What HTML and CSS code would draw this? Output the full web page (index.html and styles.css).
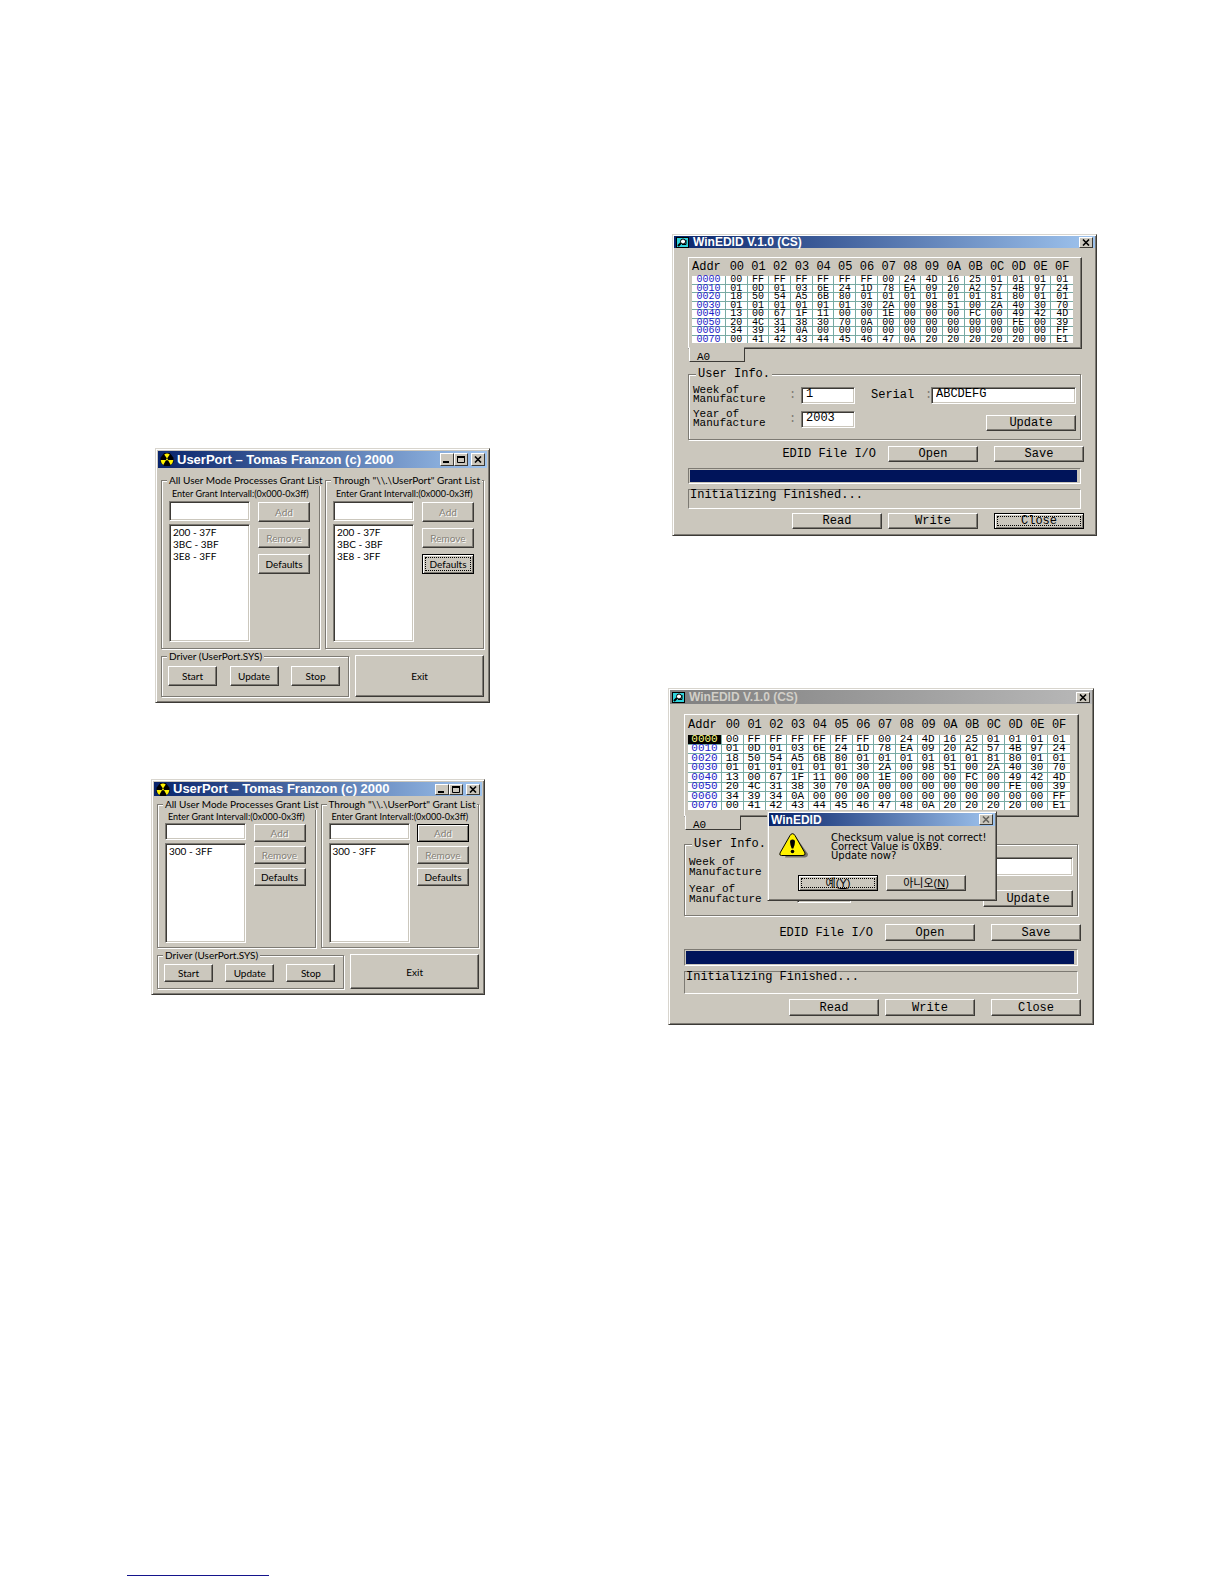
FILE: index.html
```html
<!DOCTYPE html>
<html lang="en">
<head>
<meta charset="utf-8">
<title>UserPort and WinEDID</title>
<link rel="stylesheet" href="styles.css">
</head>
<body>
<svg width="0" height="0" class="defs" aria-hidden="true">
  <symbol id="radiation" viewBox="0 0 14 14">
    <path d="M4 0H10L14 5V10L10 14H4L0 10V5Z" fill="#000"/>
    <path d="M7 6 4 1.500Q7-.5 10 1.500ZM8 7.500 13.800 7.500Q13.500 11 11 12.800ZM6 7.500 3 12.800Q.5 11 .2 7.500Z" fill="#fff200"/>
    <circle cx="7" cy="7" r="1" fill="#fff200"/>
  </symbol>
  <symbol id="lens" viewBox="0 0 13 11">
    <path d="M0 0H13V11H0Z" fill="#000"/><path d="M1 1H12V10H1Z" fill="#2fd3dc"/>
    <path d="M2 9 5 6" stroke="#000" stroke-width="2"/><circle cx="7" cy="4.500" r="2.500" fill="#fff" stroke="#000"/>
    <path d="M6 7.500H10V3" fill="none" stroke="#000"/>
  </symbol>
  <symbol id="x" viewBox="0 0 8 7"><path d="M1 .5 7 6.500M7 .5 1 6.500" stroke="#000" stroke-width="1.600"/></symbol>
  <symbol id="min" viewBox="0 0 8 7"><path d="M0 6H6" stroke="#000" stroke-width="2"/></symbol>
  <symbol id="max" viewBox="0 0 8 7"><path d="M0 1H8" stroke="#000" stroke-width="2"/><path d="M.5 1V6.500H7.500V1" fill="none" stroke="#000"/></symbol>
</svg>
<main class="page">
  <div class="column left">
    <section class="window userport">
      <header class="titlebar"><svg class="app"><use href="#radiation"/></svg><h2>UserPort – Tomas Franzon (c) 2000</h2>
        <button class="cap" aria-label="Minimize"><svg><use href="#min"/></svg></button><button class="cap" aria-label="Maximize"><svg><use href="#max"/></svg></button><button class="cap close" aria-label="Close"><svg><use href="#x"/></svg></button></header>
      <div class="ports">
        <fieldset class="group">
          <legend>All User Mode Processes Grant List</legend>
          <label class="hint" for="a1">Enter Grant Intervall:(0x000-0x3ff)</label>
          <div class="grant">
            <div class="lists"><input id="a1" type="text"><select multiple size="3" aria-label="Granted ports"><option>200 - 37F</option><option>3BC - 3BF</option><option>3E8 - 3FF</option></select></div>
            <div class="actions"><button class="btn" disabled>Add</button><button class="btn" disabled>Remove</button><button class="btn">Defaults</button></div>
          </div>
        </fieldset>
        <fieldset class="group">
          <legend>Through "\\.\UserPort" Grant List</legend>
          <label class="hint" for="a2">Enter Grant Intervall:(0x000-0x3ff)</label>
          <div class="grant">
            <div class="lists"><input id="a2" type="text"><select multiple size="3" aria-label="Granted ports"><option>200 - 37F</option><option>3BC - 3BF</option><option>3E8 - 3FF</option></select></div>
            <div class="actions"><button class="btn" disabled>Add</button><button class="btn" disabled>Remove</button><button class="btn default focus">Defaults</button></div>
          </div>
        </fieldset>
      </div>
      <div class="driver">
        <fieldset class="group">
          <legend>Driver (UserPort.SYS)</legend>
          <div class="driver-buttons"><button class="btn">Start</button><button class="btn">Update</button><button class="btn">Stop</button></div>
        </fieldset>
        <button class="btn exit">Exit</button>
      </div>
    </section>

    <section class="window userport compact">
      <header class="titlebar"><svg class="app"><use href="#radiation"/></svg><h2>UserPort – Tomas Franzon (c) 2000</h2>
        <button class="cap" aria-label="Minimize"><svg><use href="#min"/></svg></button><button class="cap" aria-label="Maximize"><svg><use href="#max"/></svg></button><button class="cap close" aria-label="Close"><svg><use href="#x"/></svg></button></header>
      <div class="ports">
        <fieldset class="group">
          <legend>All User Mode Processes Grant List</legend>
          <label class="hint" for="b1">Enter Grant Intervall:(0x000-0x3ff)</label>
          <div class="grant">
            <div class="lists"><input id="b1" type="text"><select multiple size="3" aria-label="Granted ports"><option>300 - 3FF</option></select></div>
            <div class="actions"><button class="btn" disabled>Add</button><button class="btn" disabled>Remove</button><button class="btn">Defaults</button></div>
          </div>
        </fieldset>
        <fieldset class="group">
          <legend>Through "\\.\UserPort" Grant List</legend>
          <label class="hint" for="b2">Enter Grant Intervall:(0x000-0x3ff)</label>
          <div class="grant">
            <div class="lists"><input id="b2" type="text"><select multiple size="3" aria-label="Granted ports"><option>300 - 3FF</option></select></div>
            <div class="actions"><button class="btn default" disabled>Add</button><button class="btn" disabled>Remove</button><button class="btn">Defaults</button></div>
          </div>
        </fieldset>
      </div>
      <div class="driver">
        <fieldset class="group">
          <legend>Driver (UserPort.SYS)</legend>
          <div class="driver-buttons"><button class="btn">Start</button><button class="btn">Update</button><button class="btn">Stop</button></div>
        </fieldset>
        <button class="btn exit">Exit</button>
      </div>
    </section>
  </div>

  <div class="column right">
    <section class="window edid">
      <header class="titlebar"><svg class="app"><use href="#lens"/></svg><h2>WinEDID V.1.0 (CS)</h2><button class="cap" aria-label="Close"><svg><use href="#x"/></svg></button></header>
      <div class="edid-body">
        <div class="sheet"><table class="hex" data-tail="00 41 42 43 44 45 46 47 0A 20 20 20 20 20 00 E1"></table></div>
        <div class="tab">A0</div>
        <fieldset class="group">
          <legend>User Info.</legend>
          <div class="fields">
            <label for="w1">Week of<br>Manufacture</label><span>:</span><input id="w1" type="text" value="1">
            <label for="s1" class="serial">Serial</label><span>:</span><input id="s1" type="text" value="ABCDEFG">
            <label for="y1">Year of<br>Manufacture</label><span>:</span><input id="y1" type="text" value="2003">
            <button class="btn update">Update</button>
          </div>
        </fieldset>
        <div class="row file"><span>EDID File I/O</span><button class="btn">Open</button><button class="btn last">Save</button></div>
        <div class="progress" role="progressbar" aria-label="Progress" aria-valuenow="99"><div class="bar"></div></div>
        <div class="status">Initializing Finished...</div>
        <div class="row"><button class="btn">Read</button><button class="btn">Write</button><button class="btn last default focus">Close</button></div>
      </div>
    </section>

    <section class="window edid tall">
      <header class="titlebar inactive"><svg class="app"><use href="#lens"/></svg><h2>WinEDID V.1.0 (CS)</h2><button class="cap" aria-label="Close"><svg><use href="#x"/></svg></button></header>
      <div class="edid-body">
        <div class="sheet"><table class="hex" data-selected="0000" data-tail="00 41 42 43 44 45 46 47 48 0A 20 20 20 20 00 E1"></table></div>
        <div class="tab">A0</div>
        <fieldset class="group">
          <legend>User Info.</legend>
          <div class="fields">
            <label for="w2">Week of<br>Manufacture</label><span></span><input id="w2" type="text">
            <label for="s2" class="serial"></label><span></span><input id="s2" type="text" aria-label="Serial">
            <label for="y2">Year of<br>Manufacture</label><span></span><input id="y2" type="text">
            <button class="btn update">Update</button>
          </div>
        </fieldset>
        <div class="row file"><span>EDID File I/O</span><button class="btn">Open</button><button class="btn last">Save</button></div>
        <div class="progress" role="progressbar" aria-label="Progress" aria-valuenow="99"><div class="bar"></div></div>
        <div class="status">Initializing Finished...</div>
        <div class="row"><button class="btn">Read</button><button class="btn">Write</button><button class="btn last">Close</button></div>
      </div>
      <div class="window dialog" role="dialog" aria-label="WinEDID">
        <header class="titlebar"><h2>WinEDID</h2><button class="cap dim" aria-label="Close"><svg><use href="#x"/></svg></button></header>
        <div class="message">
          <svg class="warning" viewBox="0 0 29 25"><path d="M15.500 2 29 21Q29 24 26 24.500H6Z" fill="#77736b"/><path d="M13.500.7Q15 .7 16 2.500L26 20Q26.500 22.500 24 22.500H2.500Q0 22.500 1 20L11 2.500Q12 .7 13.500.7Z" fill="#fff200" stroke="#000"/><path d="M11 8.500Q11 6.500 13.500 6.500T16 8.500Q16 12 14.300 15.500H12.700Q11 12 11 8.500Z"/><circle cx="13.500" cy="18.500" r="1.800"/></svg>
          <p>Checksum value is not correct!<br>Correct Value is 0XB9.<br>Update now?</p>
        </div>
        <div class="answers"><button class="btn default focus">예(<u>Y</u>)</button><button class="btn">아니오(<u>N</u>)</button></div>
      </div>
    </section>
  </div>
</main>
<footer class="rule"></footer>
<script src="script.js"></script>
</body>
</html>
```
FILE: script.js
```js
const common = [
  "00 FF FF FF FF FF FF 00 24 4D 16 25 01 01 01 01",
  "01 0D 01 03 6E 24 1D 78 EA 09 20 A2 57 4B 97 24",
  "18 50 54 A5 6B 80 01 01 01 01 01 01 81 80 01 01",
  "01 01 01 01 01 01 30 2A 00 98 51 00 2A 40 30 70",
  "13 00 67 1F 11 00 00 1E 00 00 00 FC 00 49 42 4D",
  "20 4C 31 38 30 70 0A 00 00 00 00 00 00 FE 00 39",
  "34 39 34 0A 00 00 00 00 00 00 00 00 00 00 00 FF"
];
for (const table of document.querySelectorAll(".hex")) {
  const columns = Array.from({ length: 16 }, (_, i) => `<th scope="col">0${i.toString(16).toUpperCase()}</th>`).join("");
  const rows = [...common, table.dataset.tail].map((line, i) => {
    const addr = `00${i}0`;
    const mark = addr === table.dataset.selected ? ' class="selected"' : "";
    return `<tr><th scope="row"${mark}>${addr}</th>${line.split(" ").map(b => `<td>${b}</td>`).join("")}</tr>`;
  }).join("");
  table.innerHTML = `<thead><tr><th scope="col" class="addr">Addr</th>${columns}</tr></thead><tbody>${rows}</tbody>`;
}
```
FILE: styles.css
```css
:root {
  --face: #cbc7bd;
  --shade: #7d7a73;
  --dark: #3c3a36;
  --mono: "Liberation Mono", "Courier New", monospace;
  --sans: "Liberation Sans", Arial, "Noto Sans CJK KR", sans-serif;
}
* { box-sizing: border-box; }
body {
  margin: 0;
  min-height: 100vh;
  display: flex;
  flex-direction: column;
  background: #fff;
  color: #000;
  font-family: var(--sans);
}
.defs { display: block; }
.page {
  display: grid;
  grid-template-columns: minmax(0, 339fr) minmax(0, 429fr);
  column-gap: 178px;
  padding: 0 127px 0 151px;
}
.column { display: flex; flex-direction: column; }
.left { padding-top: 448px; gap: 76px; }
.right { padding-top: 234px; gap: 152px; }
.rule { width: 142px; margin: auto 0 8px 127px; border-top: 1px solid #14148c; }

/* Shared window chrome */
.window {
  position: relative;
  background: var(--face);
  border: 1px solid;
  border-color: #d8d5ce var(--dark) var(--dark) #d8d5ce;
  box-shadow: inset 1px 1px #fff, inset -1px -1px var(--shade);
  padding: 1px;
}
.titlebar {
  display: flex;
  align-items: center;
  height: var(--bar);
  padding: 0 2px;
  background: linear-gradient(90deg, #08246b, #9fc4ee);
  color: #fff;
}
.titlebar.inactive { background: linear-gradient(90deg, #7f7f7f, #b8b8b8); color: #d2cfc8; }
.titlebar h2 { flex: 1; margin: 0; font-size: 12px; line-height: 12px; font-weight: 700; white-space: nowrap; }
.app { flex: none; width: 13px; height: 11px; margin-right: 4px; }
button, input, select { font: inherit; color: inherit; margin: 0; border-radius: 0; min-width: 0; }
.cap {
  display: flex;
  align-items: center;
  justify-content: center;
  flex: none;
  width: 14px;
  height: 11px;
  padding: 0;
  background: var(--face);
  border: 1px solid;
  border-color: #fff var(--dark) var(--dark) #fff;
}
.cap svg { width: 8px; height: 7px; }
.cap.dim svg { opacity: .5; }
.btn {
  padding: 0;
  background: var(--face);
  border: 1px solid;
  border-color: #fff var(--dark) var(--dark) #fff;
  box-shadow: inset -1px -1px var(--shade);
  white-space: nowrap;
}
.btn:disabled { color: #858178; text-shadow: 1px 1px #fff; }
.btn.default { border-color: #000; box-shadow: inset 1px 1px #fff, inset -1px -1px var(--shade); }
.btn.focus { outline: 1px dotted #000; outline-offset: -4px; }
input, select {
  display: block;
  width: 100%;
  background: #fff;
  border: 1px solid;
  border-color: var(--shade) #fff #fff var(--shade);
  box-shadow: inset 1px 1px var(--dark), inset -1px -1px var(--face);
  outline: 0;
}
.group {
  min-width: 0;
  margin: 0;
  padding: 0;
  border: 1px solid var(--shade);
  box-shadow: 1px 1px #fff, inset 1px 1px #fff;
}
.group legend { background: var(--face); white-space: nowrap; }

/* UserPort */
.userport {
  --bar: 17px;
  --title-gap: 6px;
  --hint: 15px;
  --input: 20px;
  --list: 118px;
  --btn: 20px;
  --btn-gap: 6px;
  --list-gap: 3px;
  --pad: 6px;
  --driver-top: 4px;
  --driver-bottom: 10px;
  margin-left: 4px;
  padding: 2px;
  font-family: Lato, "Liberation Sans", sans-serif;
  font-size: 10px;
  line-height: 12px;
}
.userport.compact {
  --bar: 14px;
  --title-gap: 2px;
  --hint: 13px;
  --input: 17px;
  --list: 100px;
  --btn: 18px;
  --btn-gap: 4px;
  --pad: 4px;
  --driver-top: 3px;
  --driver-bottom: 6px;
  margin: 0 5px 0 0;
}
.userport h2 { font-family: var(--sans); font-size: 13px; line-height: 14px; }
.userport .app { width: 14px; height: 13px; margin-right: 3px; }
.userport .cap { height: 13px; }
.userport.compact .cap { height: 11px; }
.cap.close { margin-left: 3px; }
.ports { display: grid; grid-template-columns: 1fr 1fr; gap: 5px; padding: var(--title-gap) 3px 0; }
.userport legend { margin-left: 5px; padding: 0 2px; }
.hint { display: block; padding-left: 10px; font-size: 9px; line-height: var(--hint); white-space: nowrap; }
.grant { display: flex; justify-content: space-between; padding: 0 9px var(--pad) 7px; }
.lists { width: 81px; display: flex; flex-direction: column; gap: var(--list-gap); }
.lists input { height: var(--input); }
.lists select { height: var(--list); padding: 1px 2px; overflow: hidden; }
.lists option { padding: 0 0 0 1px; min-height: 0; line-height: 12px; }
.actions { width: 52px; display: flex; flex-direction: column; gap: var(--btn-gap); padding-top: 1px; }
.actions .btn, .driver-buttons .btn { height: var(--btn); }
.driver { display: grid; grid-template-columns: 188fr 129fr; gap: 6px; padding: 1px 3px 3px; }
.driver-buttons { display: flex; justify-content: space-between; padding: var(--driver-top) 8px var(--driver-bottom) 6px; }
.driver-buttons .btn { width: 49px; }
.exit { margin-top: 5px; }

/* WinEDID */
.edid {
  --bar: 12px;
  --sheet-gap: 9px;
  --sheet: 92px;
  --table: 84px;
  --head: 17px;
  --digits: 10px;
  --line: 9px;
  --field-row: 24px;
  --input: 17px;
  --btn: 16px;
  --gap: 6px;
  --group-gap: 7px;
  --status: 20px;
  --bottom: 5px;
  --status-gap: 4px;
  margin-left: 4px;
  font-family: var(--mono);
  font-size: 12px;
  line-height: 10px;
}
.edid.tall {
  --bar: 14px;
  --sheet-gap: 10px;
  --sheet: 103px;
  --table: 94px;
  --head: 19px;
  --digits: 11px;
  --line: 10px;
  --field-row: 27px;
  --input: 19px;
  --btn: 17px;
  --gap: 8px;
  --group-gap: 9px;
  --status: 23px;
  --bottom: 7px;
  --status-gap: 5px;
  margin: 0 3px 0 0;
}
.edid h2 { font-family: var(--sans); }
.edid-body { padding: var(--sheet-gap) 11px var(--bottom) 14px; }
.sheet {
  height: var(--sheet);
  margin-right: 2px;
  padding: 1px 8px 0 3px;
  border: 1px solid;
  border-color: #fff var(--dark) var(--dark) #fff;
  box-shadow: inset -1px -1px var(--shade);
}
.hex { width: 100%; height: var(--table); table-layout: fixed; border-collapse: separate; border-spacing: 0; font-size: var(--digits); line-height: 7px; }
.hex th, .hex td { padding: 0; font-weight: 400; text-align: center; }
.hex thead th { height: var(--head); font-size: 12px; }
.hex thead .addr { width: 34px; text-align: left; }
.hex tbody td, .hex tbody th { background: #fff; border: solid #78aaa3; border-width: 0 1px 1px 0; }
.hex tbody tr > :last-child { border-right: 0; }
.hex tbody tr:last-child > * { border-bottom: 0; }
.hex tbody th { color: #1c1cc8; }
.hex tbody th.selected { background: #000; color: #ffff80; }
.tab {
  position: relative;
  width: 56px;
  height: 15px;
  margin: -2px 0 0 1px;
  padding: 4px 0 0 7px;
  background: var(--face);
  border: 1px solid;
  border-color: var(--face) var(--dark) var(--dark) #fff;
  font-size: 11px;
}
.edid .group { margin: var(--group-gap) 3px 0 0; }
.edid legend { margin-left: 7px; padding: 0 2px; }
.fields {
  display: grid;
  grid-template-columns: 96px 12px 54px 16px 54px 6px minmax(0, 1fr);
  grid-auto-rows: var(--field-row);
  align-items: center;
  padding: 4px 4px 8px;
  line-height: var(--line);
}
.fields label { font-size: 11px; }
.fields span { color: var(--shade); }
.fields input { height: var(--input); padding: 0 4px 2px; }
.fields .serial { grid-column: 5; font-size: 12px; }
.update { grid-column: 5 / -1; justify-self: end; align-self: end; }
.edid .btn { width: 90px; height: var(--btn); line-height: 10px; }
.row { display: flex; justify-content: flex-end; align-items: center; gap: 6px; margin-top: var(--gap); }
.row .last { margin-left: 10px; }
.file span { margin-right: 6px; }
.progress, .status { margin: var(--gap) 3px 0 0; border: 1px solid; border-color: var(--shade) #fff #fff var(--shade); }
.progress { height: var(--btn); padding: 1px 3px 1px 1px; }
.bar { height: 100%; background: #00145a; }
.status { height: var(--status); margin-top: 5px; padding-left: 1px; }
.status + .row { margin-top: var(--status-gap); }

/* Checksum message over the second WinEDID window */
.edid .dialog {
  --bar: 13px;
  position: absolute;
  top: 122px;
  left: 98px;
  width: 230px;
  font-family: "DejaVu Sans", "Noto Sans CJK KR", sans-serif;
  font-size: 10px;
}
.dialog .message { display: flex; gap: 23px; padding: 7px 0 0 10px; }
.warning { flex: none; width: 29px; height: 25px; }
.message p { margin: 0; line-height: 9px; white-space: nowrap; }
.answers { display: flex; gap: 8px; padding: 15px 0 8px 29px; }
.edid .answers .btn { width: 80px; height: 16px; font-family: var(--sans); font-size: 11px; }
```
